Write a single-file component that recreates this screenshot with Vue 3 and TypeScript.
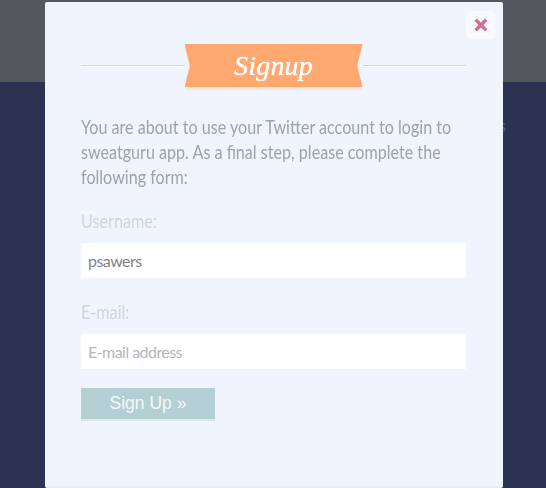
<script setup lang="ts">
const intro = 'You are about to use your Twitter account to login to sweatguru app. As a final step, please complete the following form:'
</script>

<template>
  <div class="page">
    <header class="top"></header>
    <main class="under"><span class="behind">s</span></main>
    <section class="modal">
      <button class="close" aria-label="Close">
        <svg width="14" height="14" viewBox="0 0 14 14"><path d="M2.9 2.9 11.1 11.1M11.1 2.9 2.9 11.1" stroke="#cf6f8e" stroke-width="3.4" stroke-linecap="square" fill="none" /></svg>
      </button>
      <div class="title-row">
        <span class="rule"></span>
        <div class="ribbon-wrap"><div class="ribbon"><h1>Signup</h1></div></div>
        <span class="rule"></span>
      </div>
      <p class="intro">{{ intro }}</p>
      <label class="lab narrow">Username:</label>
      <input class="field" value="psawers" />
      <label class="lab second narrow">E-mail:</label>
      <input class="field" placeholder="E-mail address" />
      <button class="submit">Sign Up »</button>
    </section>
  </div>
</template>

<style>
html, body { margin: 0; background: #2b3252; }
</style>

<style scoped>
.page { position: relative; width: 546px; height: 488px; overflow: hidden; background: #2b3252; font-family: Lato, "Liberation Sans", sans-serif; }
.top { height: 82px; background: #54595f; }
.under { height: 406px; display: flex; justify-content: flex-end; }
.behind { margin: 33px 40px 0 0; color: #565c78; font-size: 18px; line-height: 20px; }
.modal { position: absolute; left: 45px; top: 2px; width: 458px; height: 486px; box-sizing: border-box; padding: 42px 37px 0 36px; background: #f0f4fc; border-bottom: 2px solid #e7eef2; border-radius: 2px; display: flex; flex-direction: column; align-items: flex-start; }
.close { position: absolute; right: 7px; top: 9px; width: 30px; height: 28px; padding: 0; border: 0; background: #f8faff; border-radius: 6px; display: flex; align-items: center; justify-content: center; }
.title-row { width: 100%; height: 46px; display: flex; align-items: center; }
.rule { flex: 1; height: 1px; background: #d3d8de; box-shadow: 0 1px 0 #fff; margin-top: -3px; }
.ribbon-wrap { filter: drop-shadow(0 3px 0 #f7e6dc); margin-bottom: 3px; }
.ribbon { width: 178px; height: 43px; background: #ffa971; clip-path: polygon(0 0, 100% 0, 97% 50%, 100% 100%, 0 100%, 3% 50%); display: flex; align-items: center; justify-content: center; }
h1 { margin: 0; color: #fff; font: italic 400 28px/43px "Liberation Serif", serif; letter-spacing: .2px; text-shadow: 0 0 1px #fff; }
.intro { margin: 24px 0 0; width: 446px; color: #9ca3ac; font-size: 19px; line-height: 25px; transform: scaleX(.848); transform-origin: left top; }
.lab { margin-top: 20px; height: 24px; color: #cdd6dd; font-size: 19px; line-height: 24px; }
.narrow { transform: scaleX(.85); transform-origin: left top; }
.second { margin-top: 22px; }
.field { box-sizing: border-box; width: 385px; height: 35px; margin-top: 10px; padding: 0 7px; border: 0; outline: 0; background: #fff; color: #7f8189; font: 16px Lato, "Liberation Sans", sans-serif; letter-spacing: -.55px; }
.field::placeholder { color: #b3b6bd; opacity: 1; }
.submit { width: 134px; height: 31px; margin-top: 19px; padding: 0; border: 0; background: #b5d0d4; box-shadow: 0 2px 0 #dfe6ec; color: #f3f8f9; font: 17.5px "Liberation Sans", sans-serif; }
</style>
